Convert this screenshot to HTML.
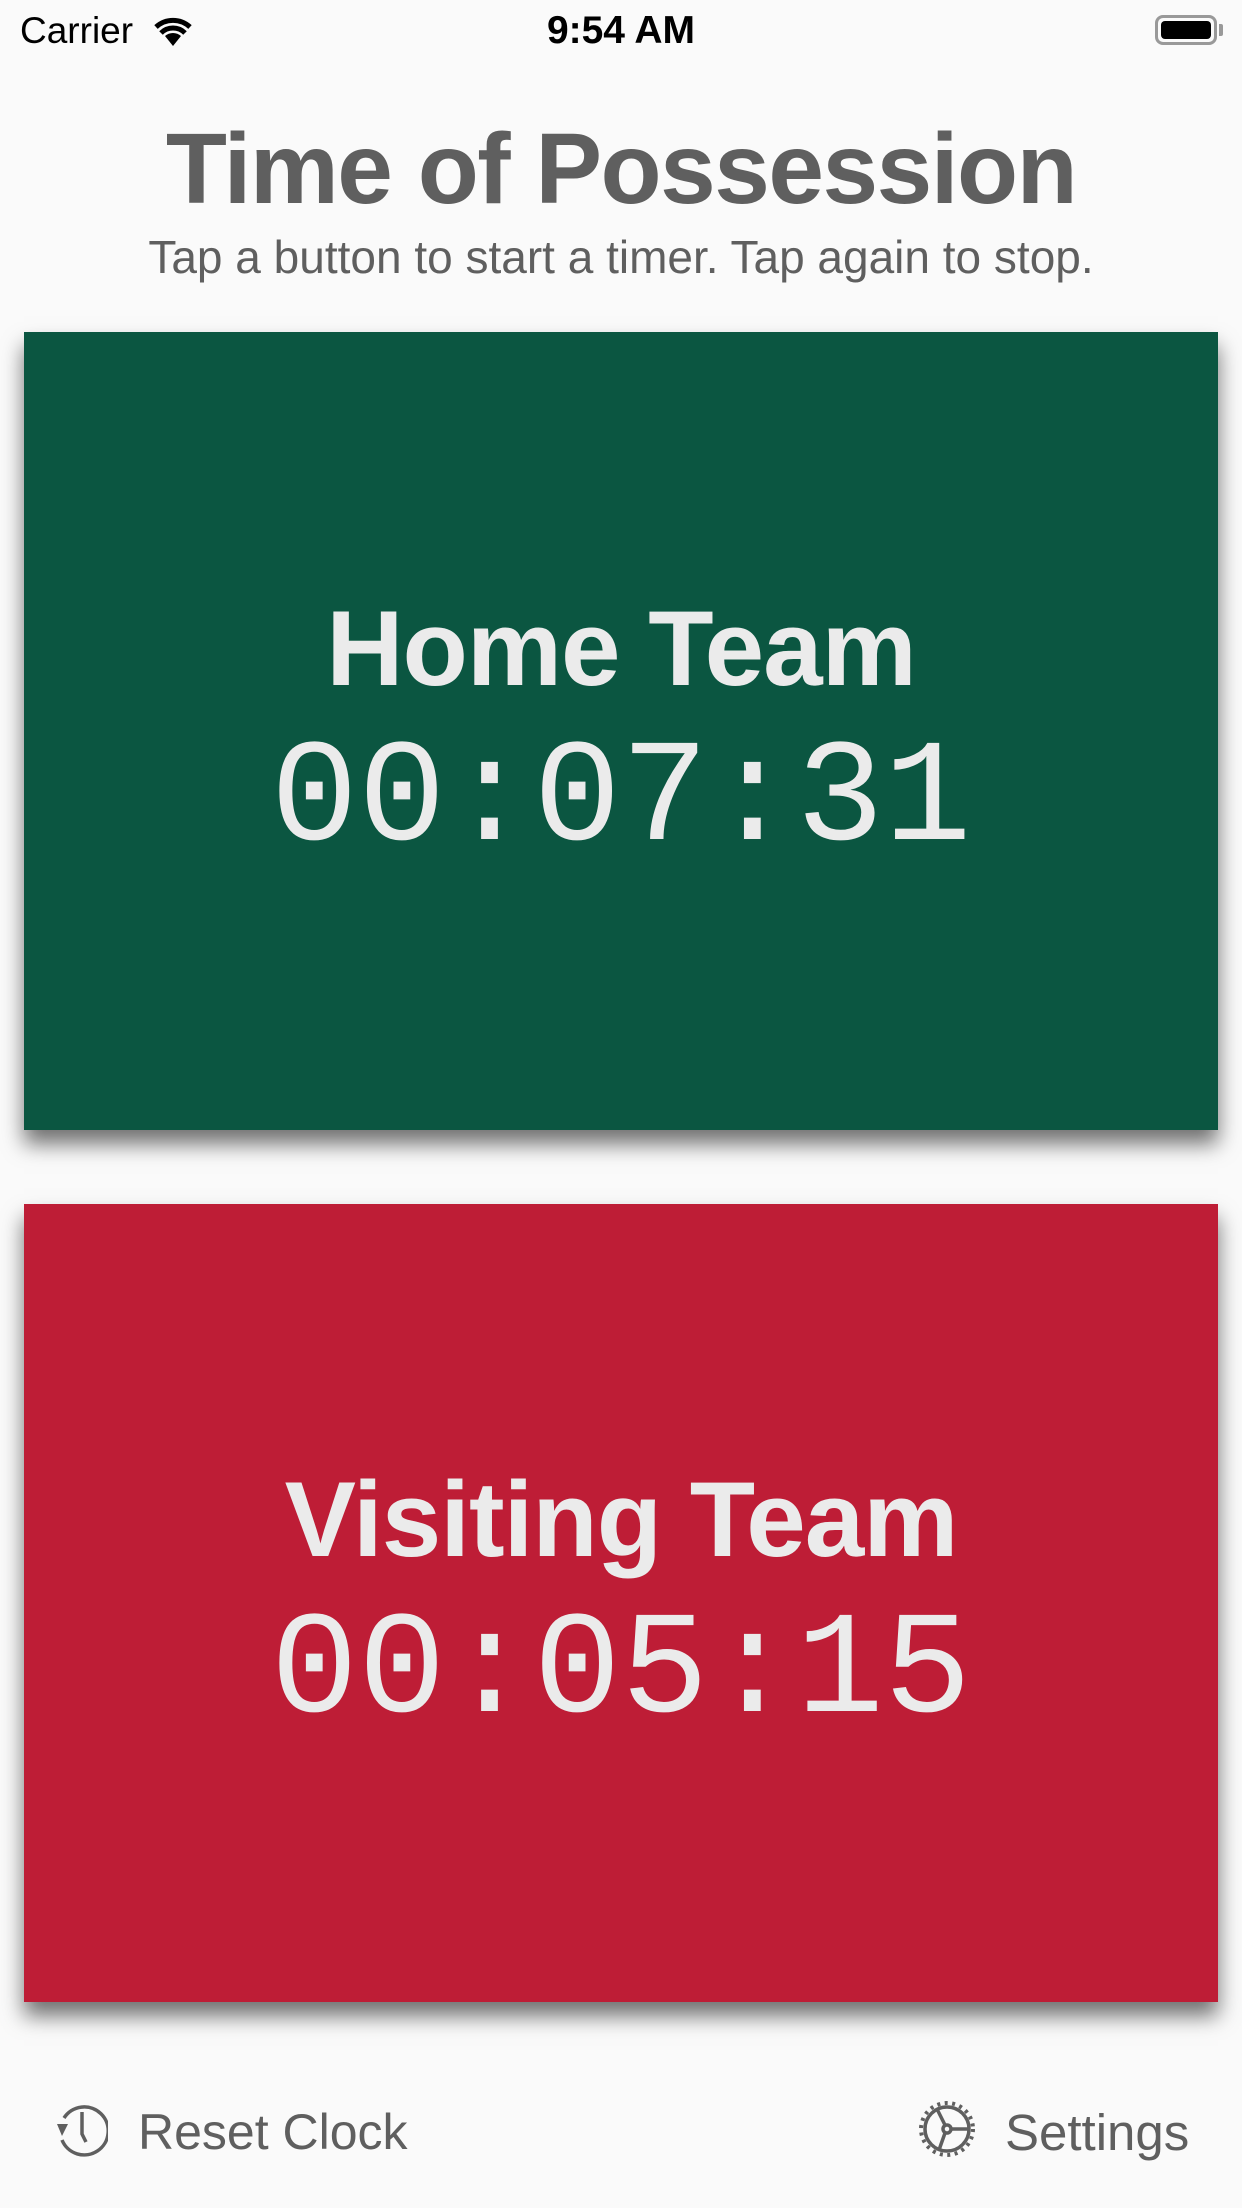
<!DOCTYPE html>
<html><head><meta charset="utf-8"><style>
*{margin:0;padding:0;box-sizing:border-box}
body{width:1242px;height:2208px;background:#fafafa;position:relative;overflow:hidden;font-family:"Liberation Sans",sans-serif}
.a{position:absolute;white-space:nowrap}
.card{position:absolute;left:24px;width:1194px;height:798px;box-shadow:0 14px 20px rgba(0,0,0,0.55)}
.t{left:0;width:1242px;text-align:center}
.team{font-weight:bold;font-size:107px;color:#ebebeb;letter-spacing:-1px}
.clk{font-family:"Liberation Mono",monospace;font-size:146px;color:#ebebeb}
</style></head><body>
<div class="a" style="left:20px;top:10px;font-size:37px;color:#000">Carrier</div>
<svg class="a" style="left:151px;top:14px" width="44" height="34" viewBox="0 0 44 34"><path d="M22 32 L14 22 A12 12 0 0 1 30 22 Z" fill="#000"/><path d="M5 13 A25 25 0 0 1 39 13" stroke="#000" stroke-width="5" fill="none"/><path d="M10 19 A17 17 0 0 1 34 19" stroke="#000" stroke-width="5" fill="none"/></svg>
<div class="a t" style="top:9px;font-size:39px;color:#000;font-weight:bold">9:54 AM</div>
<div class="a" style="left:1155px;top:15px;width:62px;height:30px;border:3px solid #999;border-radius:8px;padding:3px"><div style="width:100%;height:100%;background:#000;border-radius:4px"></div></div>
<div class="a" style="left:1219px;top:24px;width:4px;height:12px;background:#999;border-radius:0 2px 2px 0"></div>

<div class="a t" style="top:112px;font-size:100px;font-weight:bold;color:#5f5f5f;letter-spacing:-1.5px">Time of Possession</div>
<div class="a t" style="top:230px;font-size:46px;color:#5f5f5f">Tap a button to start a timer. Tap again to stop.</div>

<div class="card" style="top:332px;background:#0b5641"></div>
<div class="a t team" style="top:586px">Home Team</div>
<div class="a t clk" style="top:717px">00:07:31</div>

<div class="card" style="top:1204px;background:#be1d36"></div>
<div class="a t team" style="top:1457px">Visiting Team</div>
<div class="a t clk" style="top:1589px">00:05:15</div>

<svg class="a" style="left:52px;top:2102px" width="56" height="56" viewBox="0 0 56 56" fill="none" stroke="#5f5f5f" stroke-width="3.5"><path d="M12 16 A24 24 0 1 1 10 38"/><path d="M5 22 L10 34 L16 22 Z" fill="#5f5f5f" stroke="none"/><path d="M30 10 V32 L34 40"/></svg>
<div class="a" style="left:138px;top:2103px;font-size:50px;color:#5f5f5f">Reset Clock</div>

<svg class="a" style="left:918px;top:2100px" width="58" height="58" viewBox="0 0 58 58" fill="none" stroke="#5f5f5f" stroke-width="3.5"><circle cx="29" cy="29" r="22"/><circle cx="29" cy="29" r="26" stroke-dasharray="3 4.5" stroke-width="4"/><circle cx="29" cy="29" r="4"/><path d="M33 29 H51 M27 25 L19 9 M27 33 L21 50"/></svg>
<div class="a" style="left:1005px;top:2103px;font-size:51px;color:#5f5f5f">Settings</div>
</body></html>
